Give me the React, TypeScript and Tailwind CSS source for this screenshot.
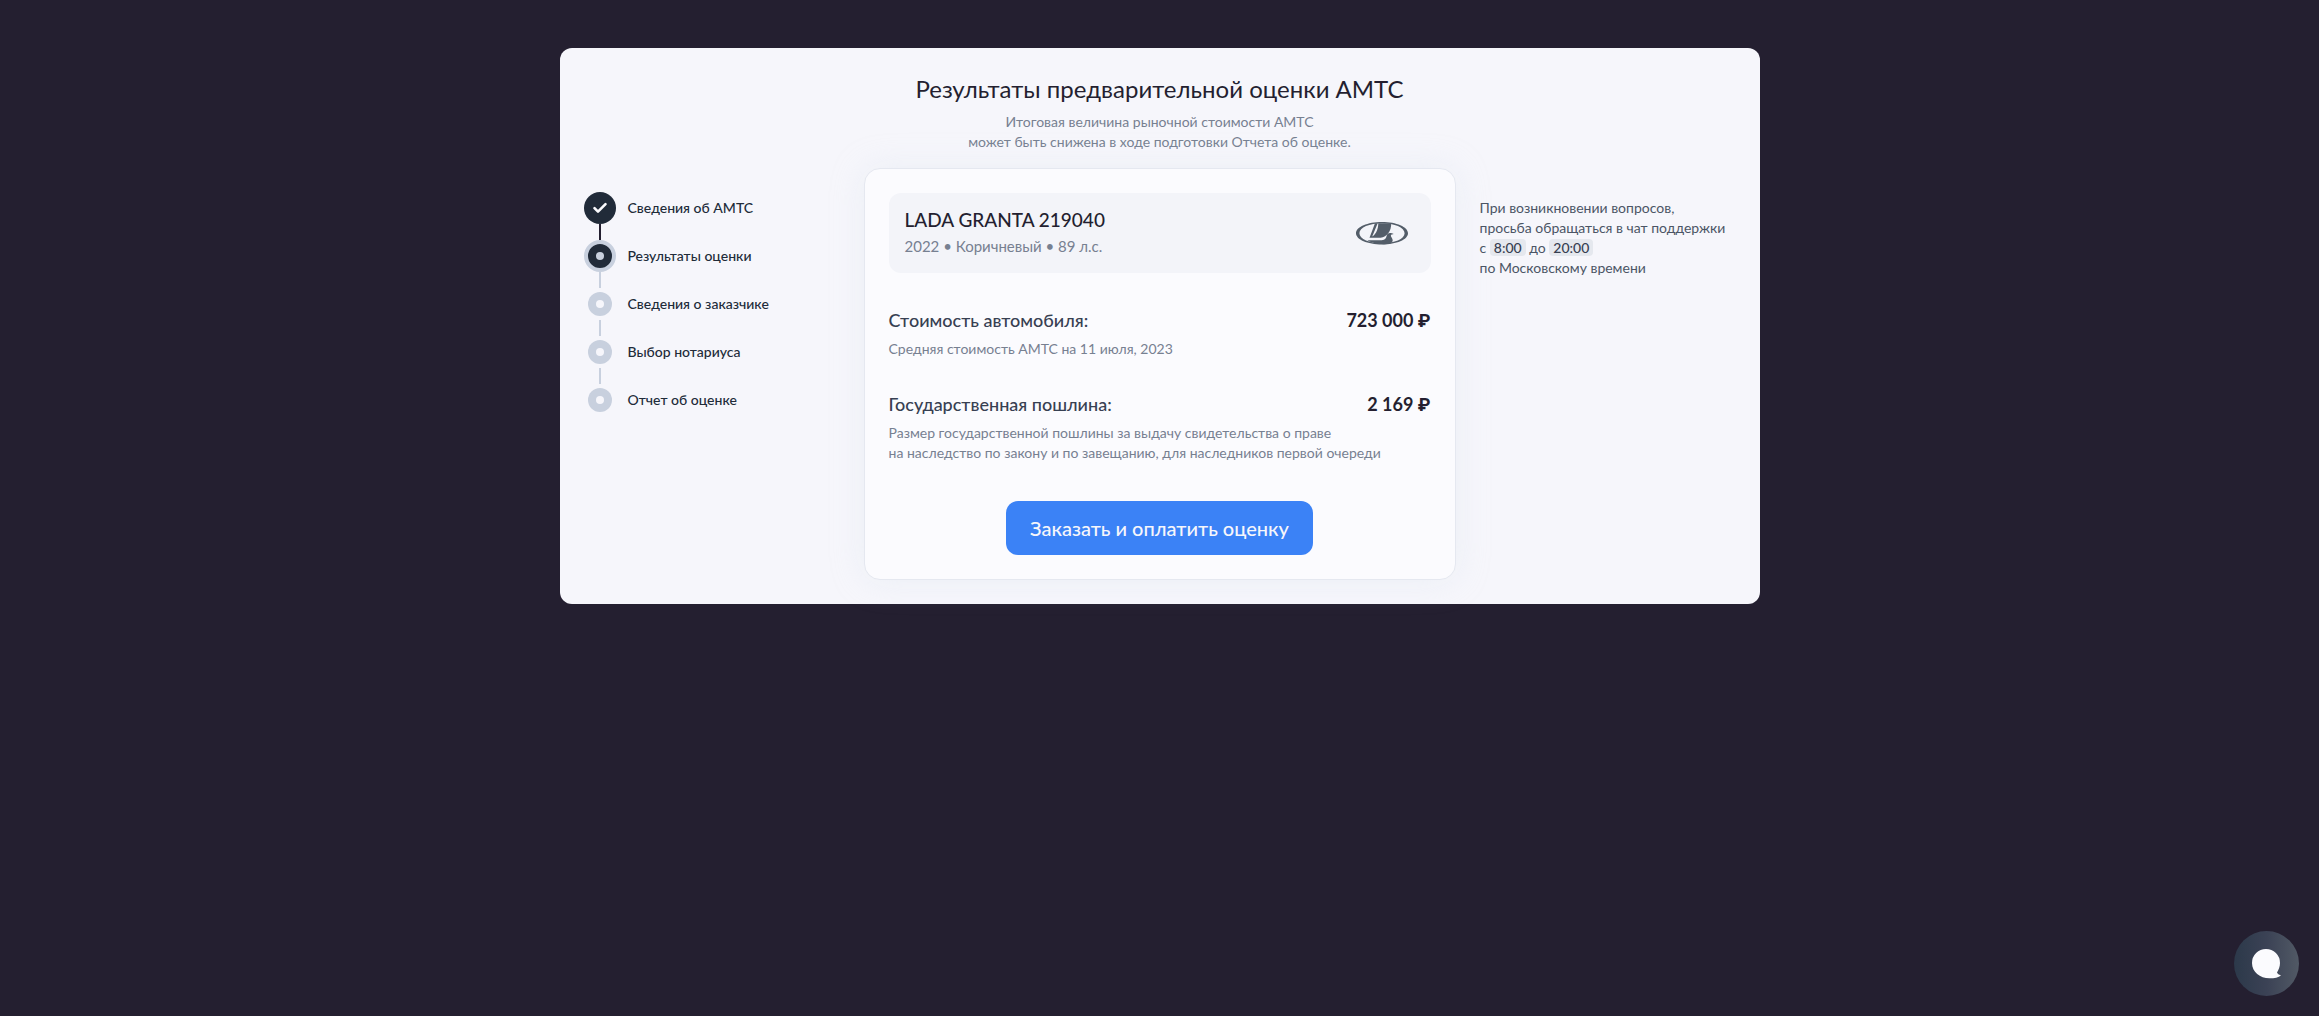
type StepStatus = 'done' | 'current' | 'next';

interface Step {
  title: string;
  status: StepStatus;
}

const steps: Step[] = [
  { title: 'Сведения об АМТС', status: 'done' },
  { title: 'Результаты оценки', status: 'current' },
  { title: 'Сведения о заказчике', status: 'next' },
  { title: 'Выбор нотариуса', status: 'next' },
  { title: 'Отчет об оценке', status: 'next' },
];

function StepMark({ status }: { status: StepStatus }) {
  if (status === 'done') {
    return (
      <span className="flex size-8 items-center justify-center rounded-full bg-[#212b39]">
        <svg width="16" height="16" viewBox="0 0 16 16" fill="none">
          <path d="M2.500 8.200 6 11.700 13.500 4.200" stroke="#fbfbfe" strokeWidth="2.600" strokeLinecap="round" strokeLinejoin="round" />
        </svg>
      </span>
    );
  }

  if (status === 'current') {
    return (
      <span className="flex size-8 items-center justify-center rounded-full border-4 border-[#c8d0de] bg-[#212b39]">
        <span className="size-2 rounded-full bg-[#c8d0de]" />
      </span>
    );
  }

  return (
    <span className="flex size-8 items-center justify-center">
      <span className="flex size-6 items-center justify-center rounded-full bg-[#c8d0de]">
        <span className="size-2 rounded-full bg-[#f6f6fb]" />
      </span>
    </span>
  );
}

function Steps() {
  return (
    <ol className="pt-6">
      {steps.map((step, i) => (
        <li key={step.title}>
          <div className="flex items-center gap-3 text-sm font-medium text-[#212b39]">
            <StepMark status={step.status} />
            {step.title}
          </div>
          {i < steps.length - 1 && (
            <div className="flex h-4 w-8 justify-center">
              <span className={step.status === 'done' ? 'w-0.5 bg-[#241f30]' : 'w-0.5 bg-[#c8d0de]'} />
            </div>
          )}
        </li>
      ))}
    </ol>
  );
}

function LadaLogo() {
  return (
    <svg width="54" height="26" viewBox="0 0 54 26" role="img" aria-label="LADA">
      <path
        fill="#535d69"
        fillRule="evenodd"
        d="M27 2c14.500 0 26 4.900 26 11.200S41.500 24.400 27 24.400 1 19.500 1 13.200 12.500 2 27 2Zm0 1.200C14.500 3.200 4.400 7.400 4.400 13.200S14.500 23.200 27 23.200s22.600-4.200 22.600-10S39.500 3.200 27 3.200Z"
      />
      <path
        fill="#535d69"
        d="M20 3.200h2.700l-5.500 13.200c4.400-2.500 6-8 6.100-13.200h12.900c.2 8-4 13.300-10.700 14.600H14.500L20 3.200Z"
      />
      <path
        fill="#535d69"
        d="M12.500 20.300h12.700c4.300 0 5.600-1.400 6.300-4 .4-2 1.800-3.200 3.600-3.200 1.200 0 2 .4 3.600.9l-2.600.7c-1 1.700 1.600 3.300 1.600 5.500 0 1.500-1 2.800-2.300 3.300-7 1.400-17.400.5-22.900-3.200Z"
      />
    </svg>
  );
}

interface CostRowProps {
  label: string;
  price: string;
  lines: string[];
}

function CostRow({ label, price, lines }: CostRowProps) {
  return (
    <div>
      <div className="flex items-center justify-between text-lg/[30px]">
        <h3 className="font-medium text-[#374052]">{label}</h3>
        <p className="font-bold text-[#241f30]">{price}</p>
      </div>
      <p className="mt-1 text-sm text-[#778091]">
        {lines.map(line => (
          <span key={line} className="block">{line}</span>
        ))}
      </p>
    </div>
  );
}

export default function App() {
  return (
    <div className="min-h-screen bg-[#241f30] px-6 py-12 font-['Lato','Roboto',sans-serif]">
      <main className="mx-auto max-w-[1200px] rounded-xl bg-[#f6f6fb] p-6">
        <header className="mb-4 text-center">
          <h1 className="text-2xl/[34px] text-[#241f30]">Результаты предварительной оценки АМТС</h1>
          <p className="mt-1.5 text-sm text-[#778091]">
            Итоговая величина рыночной стоимости АМТС
            <br />
            может быть снижена в ходе подготовки Отчета об оценке.
          </p>
        </header>

        <div className="grid grid-cols-[1fr_592px_1fr]">
          <Steps />

          <section className="rounded-2xl border border-[#e5e8f0] bg-[#fbfbfe] p-6 shadow-[0_0_32px_rgba(215,225,238,0.35)]">
            <div className="mb-8 flex h-20 items-center justify-between rounded-xl bg-[#f3f4f9] pr-[22px] pl-4">
              <div>
                <h2 className="text-[19px]/[26px] font-medium text-[#241f30]">LADA GRANTA 219040</h2>
                <p className="text-[15px]/[26px] text-[#778091]">2022 • Коричневый • 89 л.с.</p>
              </div>
              <LadaLogo />
            </div>

            <div className="space-y-[30px]">
              <CostRow
                label="Стоимость автомобиля:"
                price="723 000 ₽"
                lines={['Средняя стоимость АМТС на 11 июля, 2023']}
              />
              <CostRow
                label="Государственная пошлина:"
                price="2 169 ₽"
                lines={[
                  'Размер государственной пошлины за выдачу свидетельства о праве',
                  'на наследство по закону и по завещанию, для наследников первой очереди',
                ]}
              />
            </div>

            <div className="mt-[38px] flex justify-center">
              <button type="button" className="h-[54px] rounded-xl bg-[#3b82f6] px-6 text-xl font-medium text-[#f6f6fb]">
                Заказать и оплатить оценку
              </button>
            </div>
          </section>

          <aside className="pt-[30px] pl-6 text-sm text-[#4b5565]">
            При возникновении вопросов,
            <br />
            просьба обращаться в чат поддержки
            <br />
            с <time className="rounded bg-[#e5e8ee] px-1 font-medium text-[#374052]">8:00</time> до{' '}
            <time className="rounded bg-[#e5e8ee] px-1 font-medium text-[#374052]">20:00</time>
            <br />
            по Московскому времени
          </aside>
        </div>
      </main>

      <button
        type="button"
        aria-label="Чат поддержки"
        className="fixed right-5 bottom-5 flex size-[65px] items-center justify-center rounded-full bg-linear-to-r/srgb from-[#2c394a] via-[#3b4255] to-[#515965]"
      >
        <svg width="32" height="32" viewBox="0 0 32 32">
          <path
            fill="#fbfbfe"
            d="M15 1a14 14 0 0 1 14 14c0 4-1.500 6.700-3 9.500.3 1.200 1.800 2.200 4 3-2.500 2-6.500 2.800-11.500 2.800C9 30.300 1 24 1 15A14 14 0 0 1 15 1Z"
          />
        </svg>
      </button>
    </div>
  );
}
